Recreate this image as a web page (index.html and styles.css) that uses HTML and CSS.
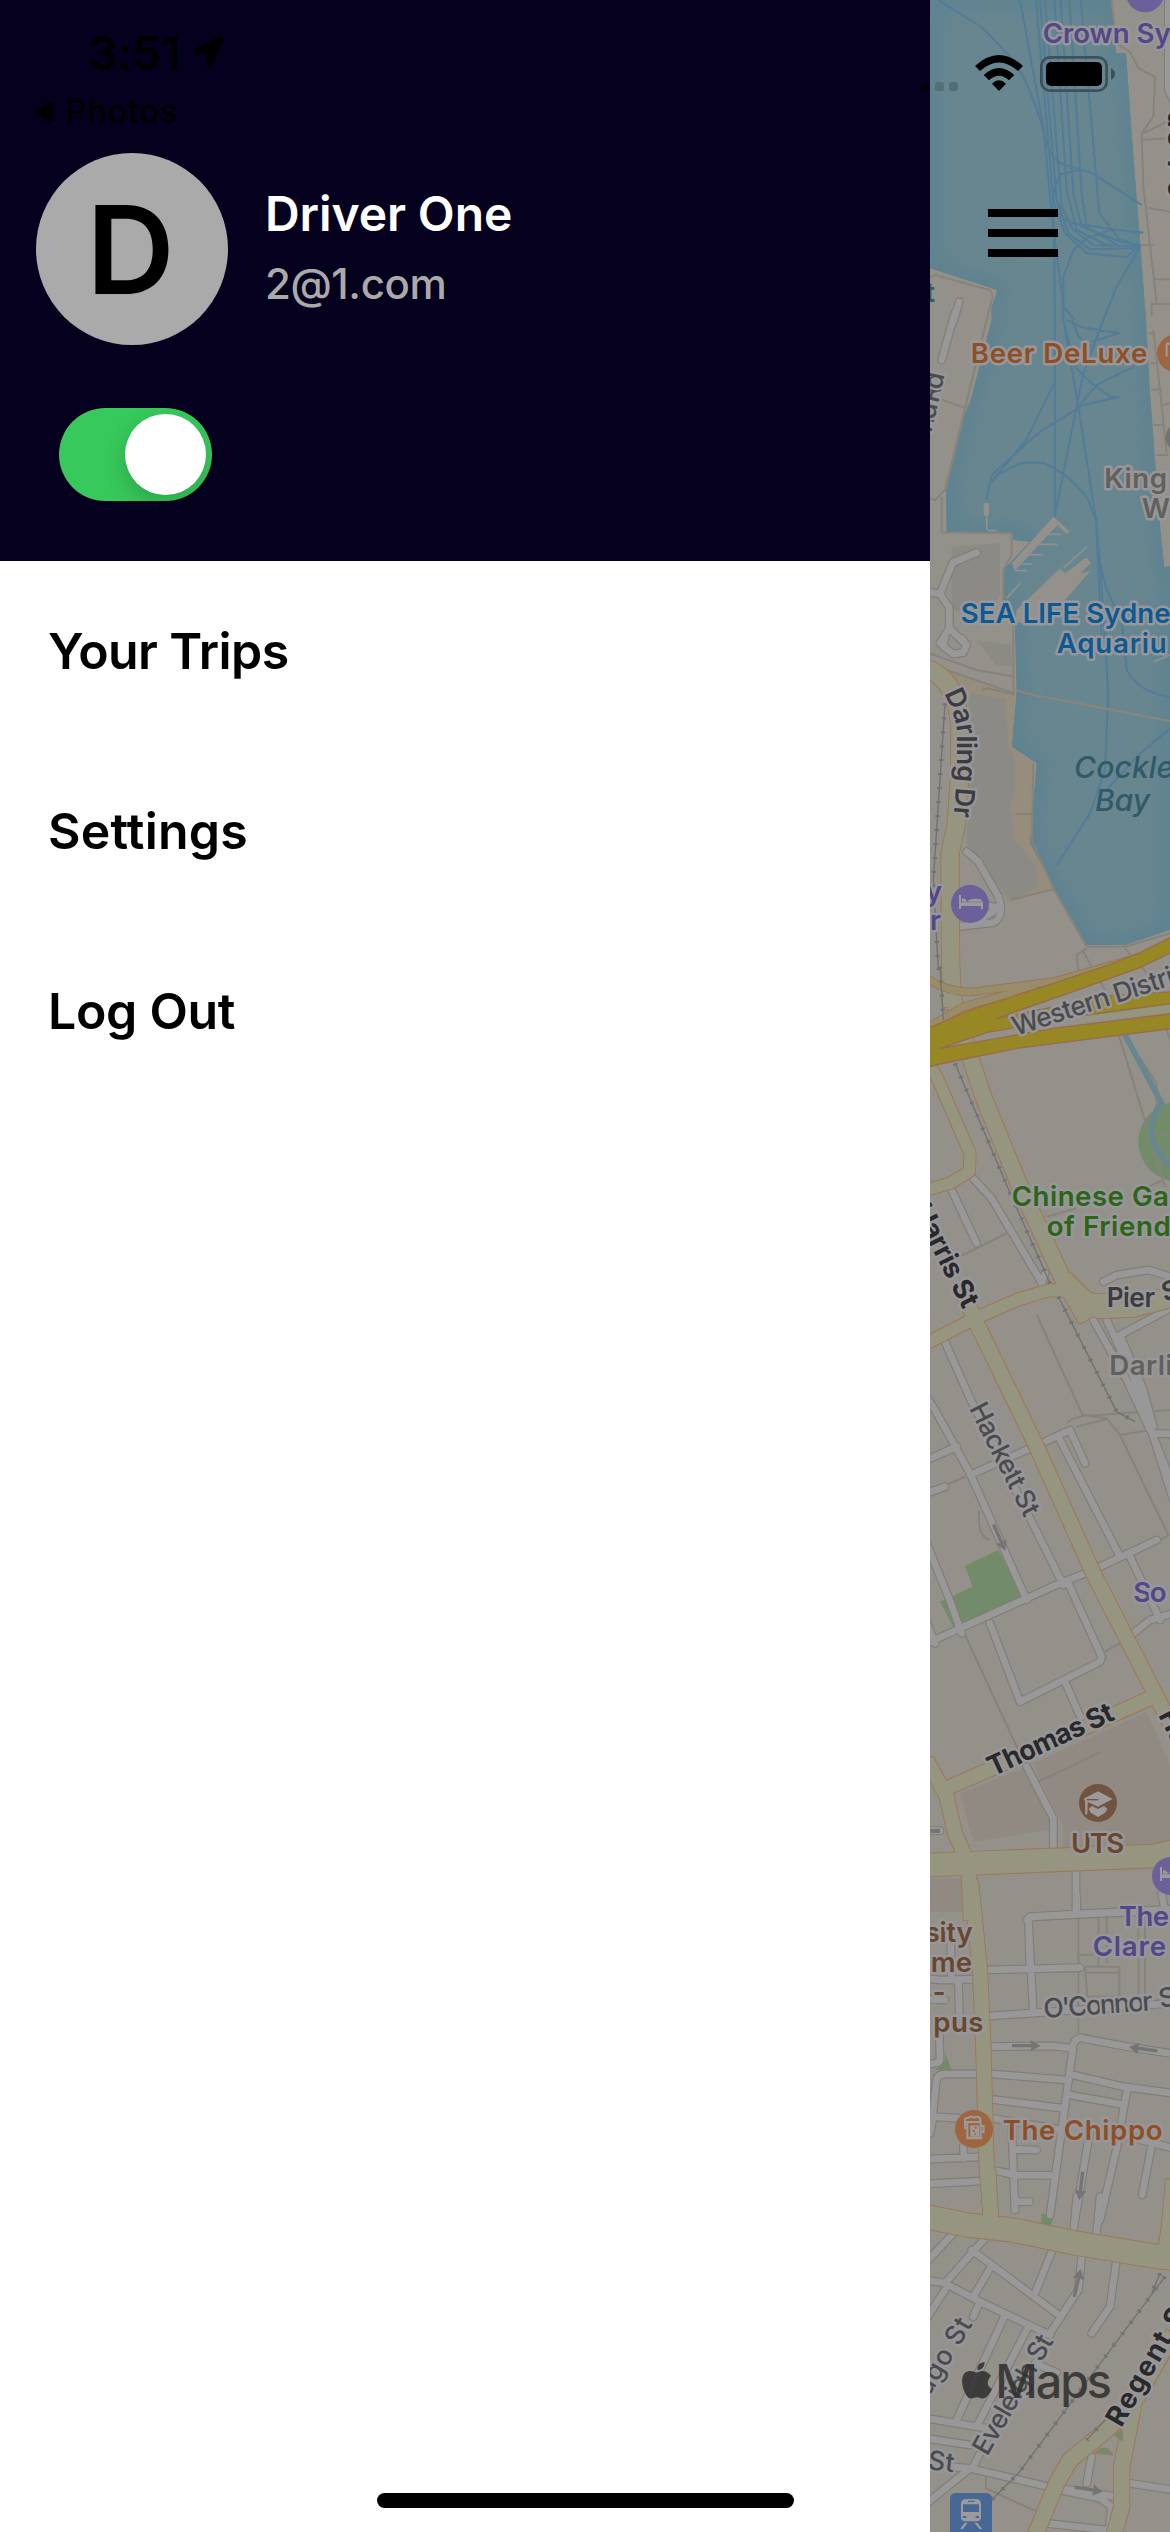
FILE: index.html
```html
<!DOCTYPE html>
<html lang="en">
<head>
<meta charset="utf-8">
<title>Driver menu</title>
<link rel="stylesheet" href="styles.css">
</head>
<body>
<div class="screen">
  <aside class="drawer">
    <header class="profile">
      <div class="profile-row">
        <div class="avatar"><span>D</span></div>
        <div class="identity">
          <div class="name">Driver One</div>
          <div class="email">2@1.com</div>
        </div>
      </div>
      <div class="toggle"><span class="knob"></span></div>
    </header>
    <nav class="menu">
      <a class="item trips">Your Trips</a>
      <a class="item settings">Settings</a>
      <a class="item logout">Log Out</a>
    </nav>
  </aside>

  <main class="map">
    <svg class="canvas" viewBox="30 0 720 7596" width="240" height="2532">
      <defs>
        <path id="water" d="M30 0H575L588 160H618L635 400L660 720L678 960L690 1180L705 1380L722 1600L733 1702L750 1698V2790L615 2835H500L400 2665L330 2530L350 2290L275 2240L290 2080L285 1870L250 1820V1710L330 1625L280 1620L275 1597H80L78 1475L135 1240L152 1200L215 960L214 925L232 870L30 805Z"/>
        <clipPath id="shore"><use href="#water"/></clipPath>
        <filter id="soft" x="-20%" y="-5%" width="140%" height="110%"><feGaussianBlur stdDeviation="28"/></filter>
        <path id="darling" d="M72 2080Q105 2140 112 2200V2310L100 2470"/>

        <g id="minor">
          <g transform="translate(0,0)"><path d="M118 905L98 970"/><path d="M745 0V270L770 320"/></g>
          <g transform="translate(0,960)"><path d="M104 -20L65 120M20 815L60 822L98 728L170 698M60 822L88 862V925L60 970M88 925L140 975"/></g>
          <g transform="translate(0,1920)"><path d="M75 -5L70 20L100 42L130 38L140 15L125 -5M140 635L175 665L235 770Q255 830 220 848L110 860M235 802L180 795M220 815L175 840"/></g>
          <g transform="translate(0,2880)"><path d="M95 690L170 850M155 650L215 715L375 985M550 965L590 945L685 930L750 950M740 440"/></g>
          <g transform="translate(0,3840)"><path d="M68 170L150 355L430 915M0 320L45 390L150 580L320 960M20 540L110 500M20 640L75 620M150 585L330 505M365 490L450 450L495 550M420 480L600 830M20 1090L420 910L520 870L710 780M20 790L85 950L125 1060M445 910L545 1130L540 1145L300 1265L210 1030M630 830L720 1020M520 120L620 300L700 470L760 660M560 120L640 290L680 420L760 620M600 165L760 80M600 165L670 330L700 440M700 460L760 462M365 10L375 -20"/></g>
          <g transform="translate(0,4800)"><path d="M437 250L485 360M320 500L400 655V745M468 810V930M320 960L330 950L760 930M640 100L690 60L760 40M0 15L45 130M725 880L740 960M20 692H60"/></g>
          <g transform="translate(0,5700)"><path d="M470 -10V40M325 60L340 340M330 200L325 65Q325 50 345 50L470 42L750 28M195 210L480 203M205 348L400 335L750 310M205 440L400 438L455 445M750 460L620 440L480 413Q458 420 458 450L390 945M20 235L60 240L155 238M92 120L94 230M115 245L118 350M30 298L75 300M58 400L60 480Q60 490 30 492M40 650L30 700M170 522H75Q50 522 48 550L38 650L120 655M215 522L440 540M460 525L610 560L760 580M215 598L430 625M450 585L600 612M215 655L430 690M620 575L590 745L540 960M510 690L465 960M130 740L132 775M20 778L185 770M20 852L185 843M275 680L285 930M280 748L350 750M285 905L328 905M228 812L285 825L400 826M550 690L760 745M693 745L667 885"/></g>
          <g transform="translate(0,6600)"><path d="M470 -10L462 85M540 -10L530 100M20 185L110 90M75 250L195 115M155 150L410 340M210 205L160 290M395 155L345 280M485 170L475 270L390 400M588 190L570 320L515 400M20 240L75 250L180 305L390 405M75 270L20 355M180 305L160 350M255 345L110 660M325 380L175 670M345 490L410 518M20 655L200 685M20 715L150 735M90 800L150 805L385 860L590 890M150 805L20 910M200 720L160 800M515 770L500 850M420 870L540 895L575 920L565 1000M380 970L560 990M630 850L760 870"/></g>
        </g>

        <g id="major">
          <g transform="translate(0,1920)"><path style="stroke-width:52" d="M20 85Q85 110 110 190L120 260L118 420L108 560L90 640L92 980L95 1100"/></g>
          <g transform="translate(0,2880)"><path style="stroke-width:48" d="M90 -40L100 120L150 290L190 410L300 680L430 960L500 1080"/><path style="stroke-width:34" d="M20 300L50 350L150 580L148 635L90 670L20 690"/></g>
          <g transform="translate(0,3840)"><path style="stroke-width:36" d="M20 190L165 115L290 60L390 30L450 35L510 60L760 55"/><path style="stroke-width:44" d="M120 20L170 130L350 500L520 880L720 1270L780 1390"/><path style="stroke-width:60" d="M430 0L490 60L540 85L640 80L760 50"/></g>
          <g transform="translate(0,4800)"><path style="stroke-width:42" d="M20 480L80 590L105 700L145 790L152 960M80 565L400 425L700 290"/><path style="stroke-width:68" d="M20 795L150 790L700 768L780 750"/></g>
          <g transform="translate(0,5700)"><path style="stroke-width:43" d="M152 -60L180 210L190 440L200 800L213 960"/></g>
          <g transform="translate(0,6600)"><path style="stroke-width:43" d="M205 -90L213 60"/><path style="stroke-width:70" d="M20 50L140 75L280 90L460 128L700 168L760 175"/><path style="stroke-width:55" d="M765 -60L755 60L740 170"/><path style="stroke-width:46" d="M760 400L640 610L560 690L450 780L410 850L340 1020M640 620L605 800V920L575 1030"/></g>
        </g>

        <g id="rail">
          <path d="M75 2110L40 2640L55 2910M60 2900L70 3060M105 3190L275 3590L390 3850M415 3890L590 4235L645 4265"/>
          <path d="M735 6830L295 7420L215 7500M560 7255L500 7320M720 6820L695 6880"/>
        </g>
        <symbol id="bed" viewBox="0 0 72 42"><path d="M0 0H6V22H72V42H66V33H6V42H0ZM9 10L18 11L25 20H9ZM26 18Q36 9 62 12Q70 14 70 20H30Z"/></symbol>
        <path id="arrow" d="M-42 -5H16L14 -17L44 0L14 17L16 5H-42Z"/>
      </defs>

      <rect class="land" x="30" width="720" height="7596"/>
      <use href="#water" class="sea"/>
      <g clip-path="url(#shore)"><use href="#water" class="shade" filter="url(#soft)"/></g>

      <!-- buildings, piers and parks -->
      <path class="building" d="M95 1640L240 1630V1785L225 1810L180 1850L95 1830Z"/>
      <path class="tan" d="M90 2015L285 2080L275 2240L340 2290L330 2530L400 2660L270 2710L140 2560L145 2150L100 2050Z"/>
      <path class="building" d="M150 2080L255 2095L265 2240L285 2280V2370L270 2420L285 2520L350 2600L355 2660L270 2700L190 2600L140 2540L150 2300Z"/>
      <path class="building" d="M170 1920L275 1935V2000L230 1995Z"/>
      <path class="land" d="M275 1690L400 1550L450 1595L440 1603L412 1575L285 1712ZM290 1830L420 1705L435 1720L500 1672L512 1690L480 1722L512 1712L435 1800L330 1875L285 1865Z"/>
      <path class="jetty" d="M200 1510V1590M205 1592H230M430 1705L500 1640M260 1795L300 1750M365 1603H422M345 1633H412M315 1664H370M300 1692H335M285 1712H320M700 1985L750 1965"/>
      <rect class="land" x="191" y="1508" width="16" height="40" rx="8"/>
      <path class="campus" d="M120 5380L320 5300L390 5420L385 5490L160 5525ZM340 5290L680 5135L760 5320V5520L700 5530L430 5545V5480L360 5340ZM30 5635H125L135 5735H30Z"/>
      <path class="grass" d="M235 4650L310 4795L105 4890L60 4805L158 4760L135 4697ZM75 6155L95 6210H45L75 6180ZM365 6640L400 6655L390 6680H362Z"/>
      <circle class="grass" cx="775" cy="3425" r="120"/>

      <path class="ferry" d="M55 0L190 85L265 165Q330 240 375 410Q390 480 435 495L515 518L665 615M300 0L370 380L395 640L430 920L465 960M348 0L400 600L435 700L500 760L620 772L660 735M360 0L410 600L445 700L510 748L640 745M375 0L425 620L460 690L520 735L655 738M403 0L440 570L470 690L560 735L660 740M422 0L460 580L485 680L600 725L660 735M448 0L485 580L500 680L600 740M482 0L538 640L595 715L660 740L590 860L550 960M480 508L425 523Q400 550 400 600L405 960V1550M415 640Q440 675 500 675L575 688L670 698M575 688L500 715L460 750L430 830V960L475 1220L528 1560L545 1920M440 960L480 980L598 1000L515 1025M455 960L475 1010L515 1040M430 960L465 1100L510 1145L570 1190L598 1190L490 1215L360 1295L215 1425L198 1500M550 960L490 1120L405 1545M640 1100L530 1155L475 1220M405 1145L318 1320L210 1450L240 1420L305 1388H370Q460 1430 505 1500L528 1560L540 1690L560 1770L605 1860L620 2010Q660 2080 750 2090M540 1690L565 2080L555 2310L510 2440L410 2595M750 2185L650 2270L560 2370"/>
      <path class="foot tanline" d="M285 2070L330 2083L750 2163"/>
      <path class="foot" d="M30 830L48 825L210 870L218 890L200 960L75 1470L45 1500L30 1495M40 1190L130 1222M65 1490V1597L275 1600V1665L250 1710V1820L280 1850V2080M575 0L588 130L630 155L655 205L705 230L700 350L665 400L670 560L710 910M665 420L740 415M670 400L740 365M685 623L750 635M660 735H700M700 838H750M695 950V912H750M700 990L720 1170L740 1360M685 1000H700M690 1090H710M695 1170L725 1167M730 1215L750 1210M700 1275H730M710 1365H745M30 1960L170 2010L285 2030M80 2010L285 2080M185 2070L205 2065L285 2085M340 2290L335 2520L400 2665L500 2840H615L750 2800M285 2442H335M270 2700L400 2668M500 2845L470 2865L475 2910L490 2930M490 2855L555 2970M615 2845L690 2930L750 3120M595 3100L685 3395L735 3560M610 3100L710 3250V3310L685 3395L750 3408M380 3650L470 3625M630 3585L730 3540M120 3770L260 3700M350 3945L488 4245L560 4255L600 4305L745 4605L720 4620M445 4270Q440 4260 488 4248L750 4230M470 4280L560 4257M600 4305L690 4290L750 4315M80 4455L135 4430M178 4530Q170 4610 210 4620M135 4905L295 5250M555 4955L600 4930M355 5345L545 5255M475 5750V6100M535 5745V5900M560 5745V5890M655 5745V6000M675 5745V6000M495 5900H598V5990H502L495 5900M475 5865H520M500 5918H595M198 7430V7465L350 7535"/>
      <path class="stream" d="M615 3105L725 3310Q665 3390 720 3460L750 3500"/>

      <use href="#minor" class="minor-edge"/>
      <use href="#minor" class="minor-fill"/>
      <g class="major-edge">
        <use href="#major" transform="translate(-2.5,-2.5)"/><use href="#major" transform="translate(2.5,2.5)"/><use href="#major" transform="translate(2.5,-2.5)"/><use href="#major" transform="translate(-2.5,2.5)"/>
      </g>
      <use href="#major" class="major-fill"/>
      <path class="grass rimmed" d="M525 7360Q535 7343 555 7345Q572 7347 578 7365ZM583 7305L607 7288V7322Z"/>

      <!-- motorway -->
      <path class="ramp-edge" d="M20 2935Q100 2990 200 2970L400 2945L700 2860M20 3085L130 3020L350 2960"/>
      <path class="ramp" d="M20 2935Q100 2990 200 2970L400 2945L700 2860M20 3085L130 3020L350 2960"/>
      <path class="major-patch" d="M480 3050L750 3010V3040L480 3065Z"/>
      <path class="motorway" d="M20 3087L150 3030L400 2950L560 2897L660 2858L760 2808V2855L660 2903L430 2985L230 3055L570 2987L760 2975V3010L480 3048L200 3098L60 3145L400 3085L760 3040V3085L290 3145L60 3192L20 3203Z"/>

      <use href="#rail" class="rail"/>
      <use href="#rail" class="ties"/>
      <g class="arrows">
        <use href="#arrow" transform="translate(238,4612) rotate(66)"/>
        <use href="#arrow" transform="translate(318,6137)"/>
        <use href="#arrow" transform="translate(670,6147) rotate(188)"/>
        <use href="#arrow" transform="translate(483,6557) rotate(97)"/>
        <use href="#arrow" transform="translate(472,6850) rotate(-77)"/>
        <use href="#arrow" transform="translate(505,7468) rotate(9)"/>
        <rect x="28" y="5487" width="32" height="12"/>
      </g>

      <!-- points of interest -->
      <circle class="hotel" cx="675" cy="-20" r="57"/>
      <circle class="food" cx="767" cy="1060" r="56"/>
      <path class="glyph-line" d="M740 1070V1035Q743 1025 750 1035"/>
      <circle class="grey-pin" cx="782" cy="1312" r="45"/>
      <circle class="hotel" cx="150" cy="2712" r="57"/>
      <use href="#bed" class="glyph" x="117" y="2685" width="72" height="42"/>
      <circle class="school" cx="534" cy="5409" r="57"/>
      <path class="glyph" d="M534 5374L578 5397L534 5420L503 5406L502 5443L496 5445L495 5404L491 5396ZM506 5426L516 5418L534 5427L552 5418L562 5426L556 5438L534 5451L512 5438Z"/>
      <path class="cap-line" d="M500 5399H535"/>
      <circle class="hotel" cx="753" cy="5628" r="57"/>
      <use href="#bed" class="glyph" x="720" y="5601" width="72" height="42"/>
      <circle class="food" cx="162" cy="6387" r="57"/>
      <path class="glyph-line" d="M142 6366V6413H182V6366H138M184 6378H191V6396H184M140 6415H187M135 6388V6360Q133 6352 147 6353Q152 6346 161 6353Q174 6346 181 6356V6366"/>
      <path class="glyph" d="M151 6376H177V6410H151Z"/>
      <path class="beer-dots" d="M164 6380h6v6h-6zM158 6390h6v6h-6zM163 6400h5v5h-5z"/>
      <rect class="station" x="90" y="7479" width="126" height="150" rx="16"/>
      <path class="glyph" fill-rule="evenodd" d="M140 7497H168Q183 7497 183 7512V7552Q183 7564 170 7564H136Q123 7564 123 7552V7512Q123 7497 140 7497ZM129 7513V7536H177V7513ZM129 7548V7554H139V7548ZM167 7548V7554H177V7548ZM144 7502V7506H164V7502ZM134 7568H143L129 7587H120ZM163 7568H172L187 7587H178Z"/>

      <!-- labels -->
      <g class="label">
        <text class="purple" x="368" y="130" textLength="384">Crown Sy</text>
        <text class="water-name upright" x="16" y="907">t</text>
        <text class="brown-orange" x="152" y="1088" textLength="530">Beer DeLuxe</text>
        <text class="grey" x="553" y="1465" textLength="188">King</text>
        <text class="grey" x="665" y="1554">W</text>
        <text class="blue" x="122" y="1868" textLength="630">SEA LIFE Sydne</text>
        <text class="blue" x="410" y="1958" textLength="330">Aquariu</text>
        <text class="purple" x="17" y="2702">y</text>
        <text class="purple" x="30" y="2789">r</text>
        <text class="green" x="275" y="3617" textLength="472">Chinese Ga</text>
        <text class="green" x="380" y="3707" textLength="372">of Friend</text>
        <text class="grey" x="568" y="4126" textLength="190">Darli</text>
        <text class="purple" x="640" y="4805" textLength="100">So</text>
        <text class="brown" x="453" y="5558" textLength="160">UTS</text>
        <text class="purple" x="597" y="5778" textLength="150">The</text>
        <text class="purple" x="518" y="5868" textLength="220">Clare</text>
        <text class="brown" x="14" y="5825" textLength="144">sity</text>
        <text class="brown" x="32" y="5916" textLength="124">me</text>
        <text class="brown" x="38" y="6006">-</text>
        <text class="brown" x="40" y="6096" textLength="150">pus</text>
        <text class="brown-orange" x="248" y="6420" textLength="480">The Chippo</text>
      </g>
      <g class="water-name">
        <text x="462" y="2335" textLength="300">Cockle</text>
        <text x="525" y="2434" textLength="165">Bay</text>
      </g>
      <g class="street">
        <text class="light" transform="translate(44,1255) rotate(-77)" x="-45" textLength="180">nd Rd</text>
        <text class="light" transform="translate(287,3108) rotate(-18)" textLength="505">Western Distri</text>
        <text class="light" transform="translate(146,4225) rotate(63)" textLength="370">Hackett St</text>
        <text class="light" transform="translate(372,6054) rotate(-4)" textLength="328">O'Connor</text>
        <text class="light" transform="translate(722,6025) rotate(-12)">St</text>
        <text class="light" transform="translate(24,7197) rotate(-59)" x="-55" textLength="317">Hugo St</text>
        <text class="light" transform="translate(202,7370) rotate(-60)" textLength="400">Eveleigh St</text>
        <text class="light" transform="translate(22,7408) rotate(6)">St</text>
        <text class="mid"><textPath href="#darling" textLength="378">Darling Dr</textPath></text>
        <text class="dark" transform="translate(2,3680) rotate(63)" textLength="338" x="-58">Harris St</text>
        <text class="mid" transform="translate(560,3922)" textLength="145">Pier</text>
        <text class="mid" transform="translate(733,3905) rotate(-15)">S</text>
        <text class="dark" transform="translate(218,5330) rotate(-25)" textLength="408">Thomas St</text>
        <text class="dark" transform="translate(714,5145) rotate(63)">Ha</text>
        <text class="dark" transform="translate(604,7285) rotate(-60)" textLength="430">Regent St</text>
        <text class="dark" transform="translate(743,335) rotate(90)" textLength="255">as i c</text>
      </g>

      <g class="brand">
        <path d="M194 7086Q170 7088 172 7111Q194 7109 194 7086ZM213 7127Q200 7111 184 7113Q171 7118 166 7117Q155 7112 147 7113Q127 7117 126 7142Q127 7174 146 7194Q153 7197 163 7193Q172 7190 183 7195Q200 7200 216 7167Q192 7153 213 7127Z"/>
        <text x="226" y="7194" textLength="350">Maps</text>
      </g>
    </svg>
    <svg class="hamburger" viewBox="0 0 70 48" width="70" height="48"><path d="M0 0H70V8H0ZM0 20H70V28H0ZM0 40H70V48H0Z"/></svg>
  </main>

  <div class="status">
    <div class="clock">3:51
      <svg class="locate" viewBox="0 0 32 32" width="32" height="32"><path d="M28 0Q33 1 31 6L20 29Q16 34 14 28V18H4Q-2 16 2 13Z"/></svg>
    </div>
    <div class="back">
      <svg viewBox="0 0 22 22" width="22" height="22"><path d="M18 1Q21 0 21 3V19Q21 22 18 21L2 13Q-1 11 2 9Z"/></svg>
      <span>Photos</span>
    </div>
  </div>
  <svg class="signals" viewBox="0 165 600 112" width="200" height="37.33">
    <rect x="5" y="246" width="23" height="27" rx="8" class="lead"/>
    <rect x="45" y="246" width="27" height="27" rx="8" class="faint"/>
    <rect x="87" y="246" width="27" height="27" rx="8" class="faint"/>
    <path d="M165 198Q237 132 309 198L294 213Q237 162 180 213ZM191 225Q237 183 283 225L267 241Q237 214 207 241ZM216 251Q237 231 258 251L237 273Z"/>
    <rect class="cell" x="364" y="172" width="196" height="100" rx="26"/>
    <rect x="378" y="186" width="168" height="72" rx="15"/>
    <path class="nub" d="M573 205Q585 210 585 222Q585 234 573 239Z"/>
  </svg>
  <div class="home-bar"></div>
</div>
</body>
</html>
```
FILE: styles.css
```css
body { margin: 0; }
.screen {
  position: relative;
  display: flex;
  width: 1170px;
  height: 2532px;
  overflow: hidden;
  background: #fff;
  font-family: Inter, "Liberation Sans", sans-serif;
}
.drawer { width: 930px; flex: none; }
.profile {
  box-sizing: border-box;
  height: 561px;
  padding: 153px 36px 0;
  background: #06001f;
}
.profile-row { display: flex; gap: 37px; }
.avatar {
  display: flex;
  align-items: center;
  justify-content: center;
  box-sizing: border-box;
  width: 192px;
  height: 192px;
  padding-right: 3px;
  border-radius: 50%;
  background: #aaa;
  color: #000;
  font-size: 122px;
  font-weight: 600;
}
.identity { display: flex; flex-direction: column; padding-top: 32px; white-space: nowrap; }
.name { color: #fff; font-size: 48px; font-weight: 600; line-height: 58px; letter-spacing: -.1px; }
.email { color: #aaa; font-size: 42px; font-weight: 500; line-height: 50px; margin-top: 16px; letter-spacing: -.4px; }
.toggle {
  display: flex;
  justify-content: flex-end;
  box-sizing: border-box;
  width: 153px;
  height: 93px;
  margin: 63px 0 0 23px;
  padding: 6px;
  border-radius: 47px;
  background: #37c95b;
  overflow: hidden;
}
.knob { width: 81px; height: 81px; border-radius: 50%; background: #fff; box-shadow: 0 9px 24px rgba(0,0,0,.18); }
.menu { display: flex; flex-direction: column; padding: 0 48px; }
.item { height: 180px; line-height: 180px; font-size: 50px; font-weight: 600; color: #000; letter-spacing: -.6px; white-space: nowrap; }
.settings { letter-spacing: .2px; }
.logout { letter-spacing: -.3px; }

.map { position: relative; width: 240px; height: 2532px; background: #94918b; }
.canvas { display: block; }
.hamburger { position: absolute; left: 58px; top: 209px; }
.land { fill: #94918b; }
.sea { fill: #68868f; }
.shade { fill: none; stroke: #5d8291; stroke-width: 60; }
.building { fill: #8c8a84; }
.tan { fill: #968d7d; }
.campus { fill: #918a82; }
.grass { fill: #728c6a; }
.rimmed { stroke: #9c7a59; stroke-width: 3; }
.jetty { fill: none; stroke: #8e918e; stroke-width: 5; }
.ferry { fill: none; stroke: #527c98; stroke-width: 6; stroke-linejoin: round; }
.foot { fill: none; stroke: #85837b; stroke-width: 6; }
.tanline { stroke: #8b8579; }
.stream { fill: none; stroke: #68868f; stroke-width: 17; }
.minor-edge, .minor-fill { fill: none; stroke-linecap: round; stroke-linejoin: round; }
.minor-edge { stroke: #827d76; stroke-width: 27; }
.minor-fill { stroke: #989899; stroke-width: 20; }
.major-edge, .major-fill { fill: none; stroke-linejoin: round; }
.major-edge { stroke: #9c7a59; }
.major-fill { stroke: #959580; }
.ramp-edge { fill: none; stroke: #9b765b; stroke-width: 26; }
.ramp { fill: none; stroke: #998c68; stroke-width: 20; }
.major-patch { fill: #959580; }
.motorway { fill: #978725; stroke: #996c4b; stroke-width: 4; }
.rail { fill: none; stroke: #717173; stroke-width: 4; }
.ties { fill: none; stroke: #717173; stroke-width: 13; stroke-dasharray: 6 36; }
.arrows { fill: #747474; }
.hotel { fill: #6b6099; }
.food { fill: #9d6540; }
.school { fill: #70543f; }
.grey-pin { fill: #74726f; }
.station { fill: #476895; }
.glyph { fill: #9c9a9a; }
.glyph-line { fill: none; stroke: #9c9a9a; stroke-width: 6; }
.cap-line { fill: none; stroke: #70543f; stroke-width: 4; }
.beer-dots { fill: #9d6540; }

.label text, .street text {
  paint-order: stroke;
  stroke: #97969a;
  stroke-width: 15;
  stroke-linejoin: round;
  font-size: 83px;
  font-weight: 600;
}
.label .purple { fill: #534787; }
.label .brown-orange { fill: #8f4f24; }
.label .brown { fill: #68472d; }
.label .grey { fill: #63605a; }
.label .blue { fill: #0b5a94; }
.label .green { fill: #2c6516; }
.label .upright { fill: #315a69; stroke: none; }
.water-name text { fill: #315a69; font-size: 90px; font-weight: 500; font-style: italic; }
.street text { font-size: 80px; }
.street .light { fill: #4b4b4b; font-weight: 500; }
.street .mid { fill: #3c3c3c; }
.street .dark { fill: #292929; font-size: 83px; font-weight: 700; }
.brand { fill: #303030; fill-opacity: .88; }
.brand text { font-size: 140px; font-weight: 500; }

.status {
  position: absolute;
  left: 0;
  top: 0;
  display: flex;
  flex-direction: column;
  padding: 24px 0 0 32px;
  color: #000;
}
.clock { display: flex; gap: 12px; align-items: center; padding-left: 56px; font-size: 47px; font-weight: 600; line-height: 58px; letter-spacing: -.5px; }
.locate { margin-top: -3px; }
.back { display: flex; align-items: center; gap: 12px; margin-top: 10px; font-size: 32px; font-weight: 500; line-height: 40px; letter-spacing: 1px; }
.signals { position: absolute; left: 920px; top: 55px; }
.lead { fill: #03000f; }
.faint { fill: #536e77; }
.cell { fill: none; stroke: #3c515b; stroke-width: 8; }
.nub { fill: #3c515b; }
.home-bar { position: absolute; left: 377px; top: 2493px; width: 417px; height: 15px; border-radius: 8px; background: #000; }
```
